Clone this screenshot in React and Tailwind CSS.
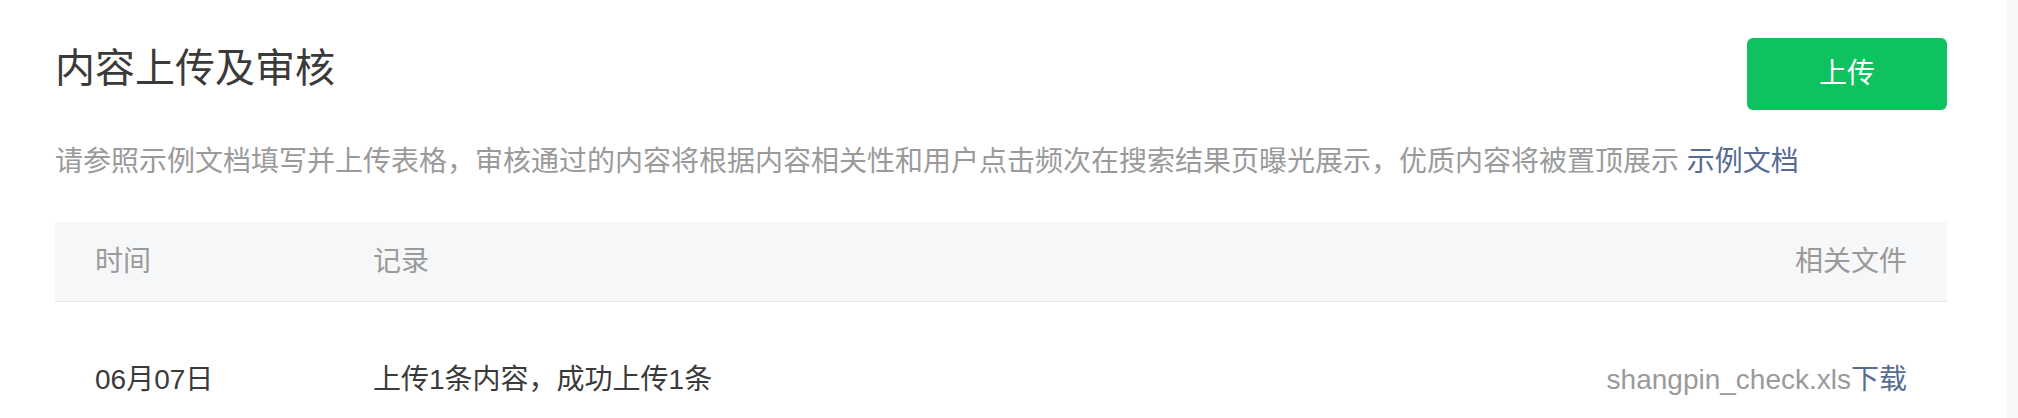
import React from 'react';

const records = [
  { date: '06月07日', text: '上传1条内容，成功上传1条', file: 'shangpin_check.xls' },
];

function App() {
  return (
    <div
      className="flex w-full min-h-[418px] bg-[#f6f7f9]"
      style={{ fontFamily: '"Liberation Sans", "Noto Sans CJK SC", sans-serif' }}
    >
      {/* main panel */}
      <div className="w-[2007px] shrink-0 bg-white pl-[55px] pr-[60px] pt-[38px]">
        <div className="flex items-start justify-between">
          <h2 className="mt-[10px] text-[40px] leading-[40px] font-normal text-[#3a3a3a]">内容上传及审核</h2>
          <button className="h-[72px] w-[200px] rounded-[6px] bg-[#0fc260] text-[28px] text-white">
            上传
          </button>
        </div>

        <p className="mt-[32px] text-[28px] leading-[40px] text-[#9a9a9a]">
          请参照示例文档填写并上传表格，审核通过的内容将根据内容相关性和用户点击频次在搜索结果页曝光展示，优质内容将被置顶展示{' '}
          <a className="text-[#576b95]">示例文档</a>
        </p>

        {/* table */}
        <div className="mt-[40px]">
          <div className="flex h-[80px] items-center border-b border-[#e4e7ec] bg-[#f6f7f9] px-[40px] text-[28px] text-[#9a9a9a]">
            <div className="w-[278px]">时间</div>
            <div className="flex-1">记录</div>
            <div>相关文件</div>
          </div>
          {records.map((r) => (
            <div key={r.date} className="flex items-center px-[40px] py-[62px] text-[28px] leading-[32px] text-[#3a3a3a]">
              <div className="w-[278px]">{r.date}</div>
              <div className="flex-1">{r.text}</div>
              <div>
                <span className="text-[#9a9a9a]">{r.file}</span>
                <a className="text-[#576b95]">下载</a>
              </div>
            </div>
          ))}
        </div>
      </div>
    </div>
  );
}

export default App;
